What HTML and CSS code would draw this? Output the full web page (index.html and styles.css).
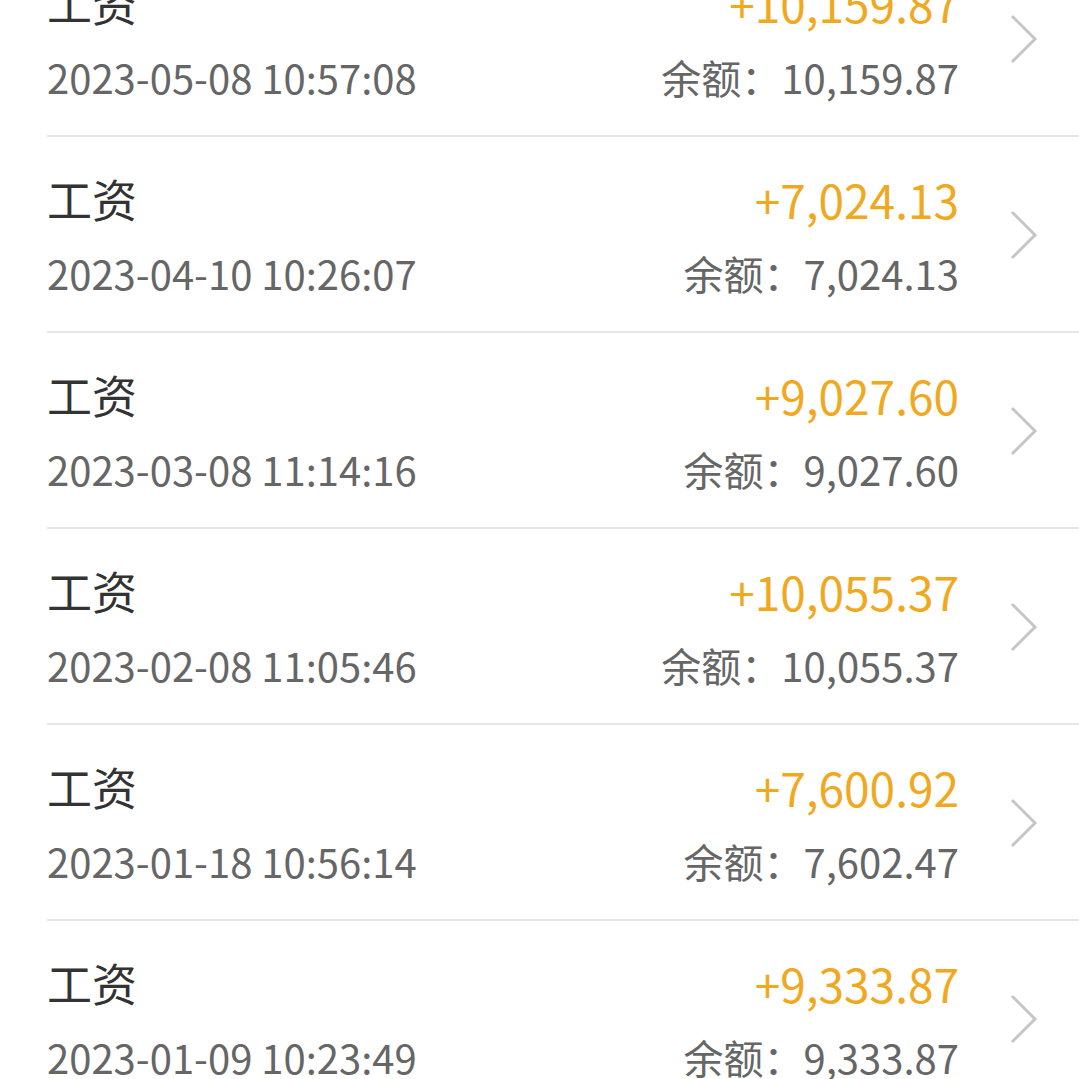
FILE: index.html
```html
<!DOCTYPE html>
<html lang="zh-CN">
<head>
    <meta charset="UTF-8">
    <meta name="viewport" content="width=device-width, initial-scale=1.0">
    <title>收支明细</title>
    <link rel="stylesheet" href="styles.css">
</head>
<body>
    <div class="list">
        <div class="item">
            <div class="info">
                <div class="title">工资</div>
                <div class="date">2023-05-08 10:57:08</div>
            </div>
            <div class="money">
                <div class="amount">+10,159.87</div>
                <div class="balance">余额：10,159.87</div>
            </div>
            <svg class="arrow" width="30" height="50" viewBox="0 0 30 50"><path d="M3 2 L26 25 L3 48" fill="none" stroke="#c6c6c6" stroke-width="3"/></svg>
        </div>
        <div class="item">
            <div class="info">
                <div class="title">工资</div>
                <div class="date">2023-04-10 10:26:07</div>
            </div>
            <div class="money">
                <div class="amount">+7,024.13</div>
                <div class="balance">余额：7,024.13</div>
            </div>
            <svg class="arrow" width="30" height="50" viewBox="0 0 30 50"><path d="M3 2 L26 25 L3 48" fill="none" stroke="#c6c6c6" stroke-width="3"/></svg>
        </div>
        <div class="item">
            <div class="info">
                <div class="title">工资</div>
                <div class="date">2023-03-08 11:14:16</div>
            </div>
            <div class="money">
                <div class="amount">+9,027.60</div>
                <div class="balance">余额：9,027.60</div>
            </div>
            <svg class="arrow" width="30" height="50" viewBox="0 0 30 50"><path d="M3 2 L26 25 L3 48" fill="none" stroke="#c6c6c6" stroke-width="3"/></svg>
        </div>
        <div class="item">
            <div class="info">
                <div class="title">工资</div>
                <div class="date">2023-02-08 11:05:46</div>
            </div>
            <div class="money">
                <div class="amount">+10,055.37</div>
                <div class="balance">余额：10,055.37</div>
            </div>
            <svg class="arrow" width="30" height="50" viewBox="0 0 30 50"><path d="M3 2 L26 25 L3 48" fill="none" stroke="#c6c6c6" stroke-width="3"/></svg>
        </div>
        <div class="item">
            <div class="info">
                <div class="title">工资</div>
                <div class="date">2023-01-18 10:56:14</div>
            </div>
            <div class="money">
                <div class="amount">+7,600.92</div>
                <div class="balance">余额：7,602.47</div>
            </div>
            <svg class="arrow" width="30" height="50" viewBox="0 0 30 50"><path d="M3 2 L26 25 L3 48" fill="none" stroke="#c6c6c6" stroke-width="3"/></svg>
        </div>
        <div class="item">
            <div class="info">
                <div class="title">工资</div>
                <div class="date">2023-01-09 10:23:49</div>
            </div>
            <div class="money">
                <div class="amount">+9,333.87</div>
                <div class="balance">余额：9,333.87</div>
            </div>
            <svg class="arrow" width="30" height="50" viewBox="0 0 30 50"><path d="M3 2 L26 25 L3 48" fill="none" stroke="#c6c6c6" stroke-width="3"/></svg>
        </div>
    </div>
</body>
</html>
```

FILE: styles.css
```css
* {
    margin: 0;
    padding: 0;
    box-sizing: border-box;
}
html, body {
    height: 100%;
    overflow: hidden;
}
body {
    background: #fff;
    font-family: "Noto Sans CJK SC", "Noto Sans", sans-serif;
}
.list {
    margin-top: -59px;
}
.item {
    display: flex;
    align-items: center;
    margin-left: 47px;
    height: 196px;
    padding-top: 3px;
    border-bottom: 2px solid #e6e6e6;
}
.info {
    flex: 1;
}
.title,
.amount {
    height: 60px;
    line-height: 60px;
}
.date,
.balance {
    height: 60px;
    line-height: 60px;
    margin-top: 14px;
}
.title {
    font-size: 45px;
    color: #333;
}
.date {
    font-size: 40px;
    color: #666;
}
.money {
    text-align: right;
}
.amount {
    font-size: 46px;
    color: #f0a91f;
}
.balance {
    font-size: 40px;
    color: #666;
}
.arrow {
    margin-left: 50px;
    margin-right: 40px;
    margin-top: -1px;
}
```
